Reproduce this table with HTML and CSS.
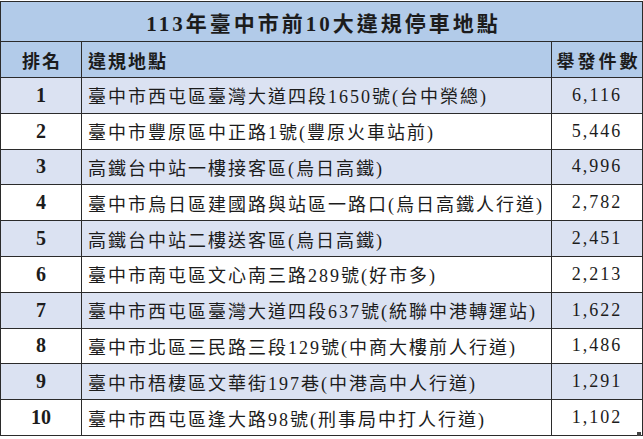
FILE: index.html
```html
<!DOCTYPE html>
<html lang="zh-Hant">
<head>
<meta charset="utf-8">
<link rel="stylesheet" href="styles.css">
</head>
<body>
<div class="wrap">
<table class="tbl">
  <colgroup><col class="c1"><col class="c2"><col class="c3"></colgroup>
  <tr class="title"><td colspan="3">113年臺中市前10大違規停車地點</td></tr>
  <tr class="head"><td class="rank">排名</td><td class="loc">違規地點</td><td class="cnt">舉發件數</td></tr>
  <tr class="odd"><td class="rank">1</td><td class="loc">臺中市西屯區臺灣大道四段1650號(台中榮總)</td><td class="cnt">6,116</td></tr>
  <tr><td class="rank">2</td><td class="loc">臺中市豐原區中正路1號(豐原火車站前)</td><td class="cnt">5,446</td></tr>
  <tr class="odd"><td class="rank">3</td><td class="loc">高鐵台中站一樓接客區(烏日高鐵)</td><td class="cnt">4,996</td></tr>
  <tr><td class="rank">4</td><td class="loc">臺中市烏日區建國路與站區一路口(烏日高鐵人行道)</td><td class="cnt">2,782</td></tr>
  <tr class="odd"><td class="rank">5</td><td class="loc">高鐵台中站二樓送客區(烏日高鐵)</td><td class="cnt">2,451</td></tr>
  <tr><td class="rank">6</td><td class="loc">臺中市南屯區文心南三路289號(好市多)</td><td class="cnt">2,213</td></tr>
  <tr class="odd"><td class="rank">7</td><td class="loc">臺中市西屯區臺灣大道四段637號(統聯中港轉運站)</td><td class="cnt">1,622</td></tr>
  <tr><td class="rank">8</td><td class="loc">臺中市北區三民路三段129號(中商大樓前人行道)</td><td class="cnt">1,486</td></tr>
  <tr class="odd"><td class="rank">9</td><td class="loc">臺中市梧棲區文華街197巷(中港高中人行道)</td><td class="cnt">1,291</td></tr>
  <tr><td class="rank">10</td><td class="loc">臺中市西屯區逢大路98號(刑事局中打人行道)</td><td class="cnt">1,102</td></tr>
</table>
<span class="handle"></span>
</div>
</body>
</html>
```

FILE: styles.css
```css
html, body {
  margin: 0;
  padding: 0;
  background: #ffffff;
}
body {
  padding-top: 1px;
  font-family: "Liberation Serif", "Noto Sans CJK TC", serif;
  color: #1c1c1c;
}
.wrap {
  position: relative;
  width: 642px;
}
.tbl {
  width: 642px;
  border-collapse: collapse;
  table-layout: fixed;
}
.c1 { width: 81px; }
.c2 { width: 470px; }
.c3 { width: 91px; }
.tbl td {
  border: 1px solid #2b2b2b;
  padding: 0;
  white-space: nowrap;
  overflow: hidden;
  font-size: 18px;
  letter-spacing: 2px;
  height: 34.8px;
}
.tbl .title td {
  height: 39px;
  background: #b2cbe9;
  text-align: center;
  font-size: 21px;
  font-weight: bold;
  letter-spacing: 3px;
  padding-left: 4px;
}
.tbl .head td {
  height: 35px;
  background: #b2cbe9;
  font-weight: bold;
  font-size: 18px;
}
.odd td { background: #dbe2f2; }
.tbl .rank {
  text-align: center;
  font-weight: bold;
  font-size: 20px;
  letter-spacing: 0;
}
.tbl .head .rank { letter-spacing: 2px; font-size: 18px; padding-left: 2px; }
.tbl .loc {
  padding-left: 6px;
}
.tbl .cnt {
  text-align: center;
  font-size: 18px;
  letter-spacing: 2px;
}
.tbl .head .cnt { letter-spacing: 3px; padding-left: 3px; }
.handle {
  position: absolute;
  right: 1px;
  bottom: 0;
  width: 4px;
  height: 4px;
  background: #444;
}
```
